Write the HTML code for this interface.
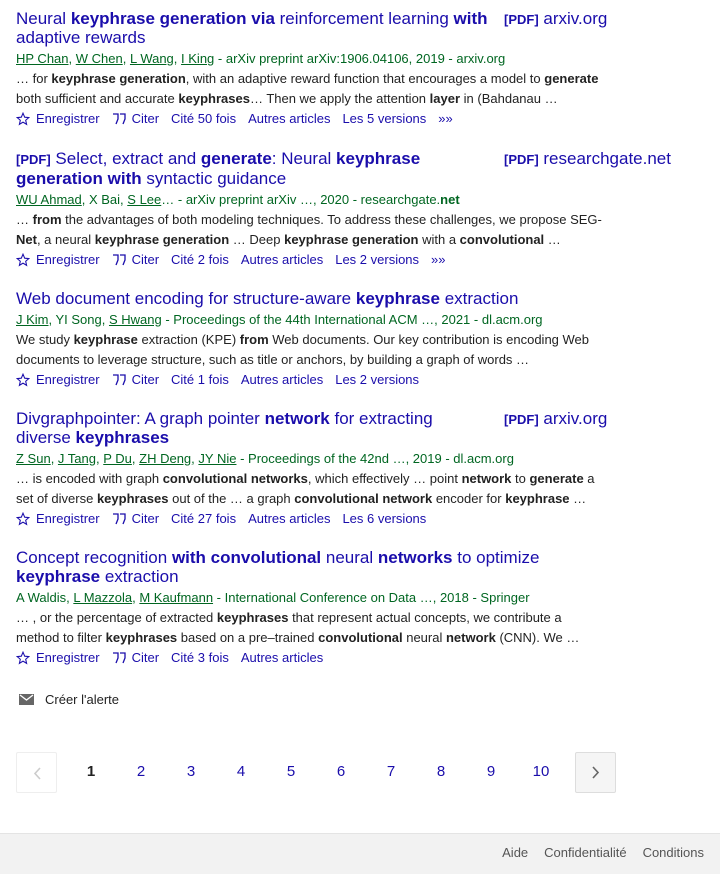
<!DOCTYPE html>
<html><head><meta charset="utf-8"><style>
*{margin:0;padding:0;box-sizing:border-box}
body{width:720px;height:874px;position:relative;background:#fff;font-family:"Liberation Sans",Arial,sans-serif;overflow:hidden}
.r{position:absolute;left:16px;width:600px}
.t{font-size:17px;line-height:19px;color:#1a0dab;width:560px;white-space:nowrap}
.t b{font-weight:bold}
.pdfs{font-size:13px;font-weight:bold}
.side{position:absolute;left:488px;top:0;font-size:17px;line-height:19px;color:#1a0dab;white-space:nowrap}
.m{font-size:13px;line-height:20px;color:#006621;margin-top:2px;white-space:nowrap}
.m u{text-decoration-color:#006621}
.s{font-size:13px;line-height:20px;color:#222;white-space:nowrap}
.l{font-size:13px;line-height:20px;color:#1a0dab;white-space:nowrap;display:flex;align-items:center}
.l span{margin-right:12px;display:inline-flex;align-items:center}
.l svg{margin-right:6px}
.pg{position:absolute;top:752px;font-size:15px;line-height:40px;width:40px;text-align:center;color:#1a0dab}
</style></head><body>

<div class="r" style="top:9px">
<div class="t">Neural <b>keyphrase generation via</b> reinforcement learning <b>with</b><br>adaptive rewards</div>
<div class="side"><span class="pdfs">[PDF]</span> arxiv.org</div>
<div class="m"><u>HP Chan</u>, <u>W Chen</u>, <u>L Wang</u>, <u>I King</u> - arXiv preprint arXiv:1906.04106, 2019 - arxiv.org</div>
<div class="s">… for <b>keyphrase generation</b>, with an adaptive reward function that encourages a model to <b>generate</b></div>
<div class="s">both sufficient and accurate <b>keyphrases</b>… Then we apply the attention <b>layer</b> in (Bahdanau …</div>
<div class="l"><span><svg width="14" height="14" viewBox="0 0 24 24"><path d="M12 2l2.9 6.9 7.1.6-5.4 4.7 1.6 7-6.2-3.8-6.2 3.8 1.6-7L2 9.5l7.1-.6z" fill="none" stroke="#1a0dab" stroke-width="1.8"/></svg>Enregistrer</span><span><svg width="14" height="12" viewBox="0 0 14 12"><path d="M1 1h5v5L4 11M8 1h5v5l-2 5" fill="none" stroke="#1a0dab" stroke-width="1.3"/></svg>Citer</span><span>Cité 50 fois</span><span>Autres articles</span><span>Les 5 versions</span><span>&#187;&#187;</span></div>
</div>

<div class="r" style="top:149px">
<div class="t"><span class="pdfs">[PDF]</span> Select, extract and <b>generate</b>: Neural <b>keyphrase</b><br><b>generation with</b> syntactic guidance</div>
<div class="side"><span class="pdfs">[PDF]</span> researchgate.net</div>
<div class="m"><u>WU Ahmad</u>, X Bai, <u>S Lee</u>… - arXiv preprint arXiv …, 2020 - researchgate.<b>net</b></div>
<div class="s">… <b>from</b> the advantages of both modeling techniques. To address these challenges, we propose SEG-</div>
<div class="s"><b>Net</b>, a neural <b>keyphrase generation</b> … Deep <b>keyphrase generation</b> with a <b>convolutional</b> …</div>
<div class="l"><span><svg width="14" height="14" viewBox="0 0 24 24"><path d="M12 2l2.9 6.9 7.1.6-5.4 4.7 1.6 7-6.2-3.8-6.2 3.8 1.6-7L2 9.5l7.1-.6z" fill="none" stroke="#1a0dab" stroke-width="1.8"/></svg>Enregistrer</span><span><svg width="14" height="12" viewBox="0 0 14 12"><path d="M1 1h5v5L4 11M8 1h5v5l-2 5" fill="none" stroke="#1a0dab" stroke-width="1.3"/></svg>Citer</span><span>Cité 2 fois</span><span>Autres articles</span><span>Les 2 versions</span><span>&#187;&#187;</span></div>
</div>

<div class="r" style="top:289px">
<div class="t">Web document encoding for structure-aware <b>keyphrase</b> extraction</div>
<div class="m"><u>J Kim</u>, YI Song, <u>S Hwang</u> - Proceedings of the 44th International ACM …, 2021 - dl.acm.org</div>
<div class="s">We study <b>keyphrase</b> extraction (KPE) <b>from</b> Web documents. Our key contribution is encoding Web</div>
<div class="s">documents to leverage structure, such as title or anchors, by building a graph of words …</div>
<div class="l"><span><svg width="14" height="14" viewBox="0 0 24 24"><path d="M12 2l2.9 6.9 7.1.6-5.4 4.7 1.6 7-6.2-3.8-6.2 3.8 1.6-7L2 9.5l7.1-.6z" fill="none" stroke="#1a0dab" stroke-width="1.8"/></svg>Enregistrer</span><span><svg width="14" height="12" viewBox="0 0 14 12"><path d="M1 1h5v5L4 11M8 1h5v5l-2 5" fill="none" stroke="#1a0dab" stroke-width="1.3"/></svg>Citer</span><span>Cité 1 fois</span><span>Autres articles</span><span>Les 2 versions</span></div>
</div>

<div class="r" style="top:409px">
<div class="t">Divgraphpointer: A graph pointer <b>network</b> for extracting<br>diverse <b>keyphrases</b></div>
<div class="side"><span class="pdfs">[PDF]</span> arxiv.org</div>
<div class="m"><u>Z Sun</u>, <u>J Tang</u>, <u>P Du</u>, <u>ZH Deng</u>, <u>JY Nie</u> - Proceedings of the 42nd …, 2019 - dl.acm.org</div>
<div class="s">… is encoded with graph <b>convolutional networks</b>, which effectively … point <b>network</b> to <b>generate</b> a</div>
<div class="s">set of diverse <b>keyphrases</b> out of the … a graph <b>convolutional network</b> encoder for <b>keyphrase</b> …</div>
<div class="l"><span><svg width="14" height="14" viewBox="0 0 24 24"><path d="M12 2l2.9 6.9 7.1.6-5.4 4.7 1.6 7-6.2-3.8-6.2 3.8 1.6-7L2 9.5l7.1-.6z" fill="none" stroke="#1a0dab" stroke-width="1.8"/></svg>Enregistrer</span><span><svg width="14" height="12" viewBox="0 0 14 12"><path d="M1 1h5v5L4 11M8 1h5v5l-2 5" fill="none" stroke="#1a0dab" stroke-width="1.3"/></svg>Citer</span><span>Cité 27 fois</span><span>Autres articles</span><span>Les 6 versions</span></div>
</div>

<div class="r" style="top:548px">
<div class="t">Concept recognition <b>with convolutional</b> neural <b>networks</b> to optimize<br><b>keyphrase</b> extraction</div>
<div class="m">A Waldis, <u>L Mazzola</u>, <u>M Kaufmann</u> - International Conference on Data …, 2018 - Springer</div>
<div class="s">… , or the percentage of extracted <b>keyphrases</b> that represent actual concepts, we contribute a</div>
<div class="s">method to filter <b>keyphrases</b> based on a pre–trained <b>convolutional</b> neural <b>network</b> (CNN). We …</div>
<div class="l"><span><svg width="14" height="14" viewBox="0 0 24 24"><path d="M12 2l2.9 6.9 7.1.6-5.4 4.7 1.6 7-6.2-3.8-6.2 3.8 1.6-7L2 9.5l7.1-.6z" fill="none" stroke="#1a0dab" stroke-width="1.8"/></svg>Enregistrer</span><span><svg width="14" height="12" viewBox="0 0 14 12"><path d="M1 1h5v5L4 11M8 1h5v5l-2 5" fill="none" stroke="#1a0dab" stroke-width="1.3"/></svg>Citer</span><span>Cité 3 fois</span><span>Autres articles</span></div>
</div>

<div style="position:absolute;top:694px;left:19px;width:15px;height:11px;background:#666"><svg width="15" height="11" viewBox="0 0 15 11" style="display:block"><path d="M1 1l6.5 5L14 1" fill="none" stroke="#fff" stroke-width="1.3"/></svg></div>
<div style="position:absolute;top:691px;left:45px;font-size:13px;line-height:18px;color:#222">Créer l'alerte</div>

<div style="position:absolute;top:752px;left:16px;width:41px;height:41px;border:1px solid #eee;border-radius:2px"><svg width="41" height="41" viewBox="0 0 41 41"><path d="M23 15l-5 5.5 5 5.5" fill="none" stroke="#ccc" stroke-width="1.6"/></svg></div>
<div class="pg" style="left:71px;color:#222;font-weight:bold">1</div>
<div class="pg" style="left:121px">2</div>
<div class="pg" style="left:171px">3</div>
<div class="pg" style="left:221px">4</div>
<div class="pg" style="left:271px">5</div>
<div class="pg" style="left:321px">6</div>
<div class="pg" style="left:371px">7</div>
<div class="pg" style="left:421px">8</div>
<div class="pg" style="left:471px">9</div>
<div class="pg" style="left:521px">10</div>
<div style="position:absolute;top:752px;left:575px;width:41px;height:41px;border:1px solid #ddd;border-radius:2px;background:#f5f5f5"><svg width="39" height="39" viewBox="0 0 39 39"><path d="M17 14l5 5.5-5 5.5" fill="none" stroke="#666" stroke-width="1.6"/></svg></div>

<div style="position:absolute;top:833px;left:0;width:720px;height:41px;background:#f2f2f2;border-top:1px solid #e4e4e4"></div>
<div style="position:absolute;top:844px;right:16px;font-size:13px;line-height:18px;color:#555;white-space:nowrap">Aide<span style="margin-left:16px">Confidentialité</span><span style="margin-left:16px">Conditions</span></div>
</body></html>
